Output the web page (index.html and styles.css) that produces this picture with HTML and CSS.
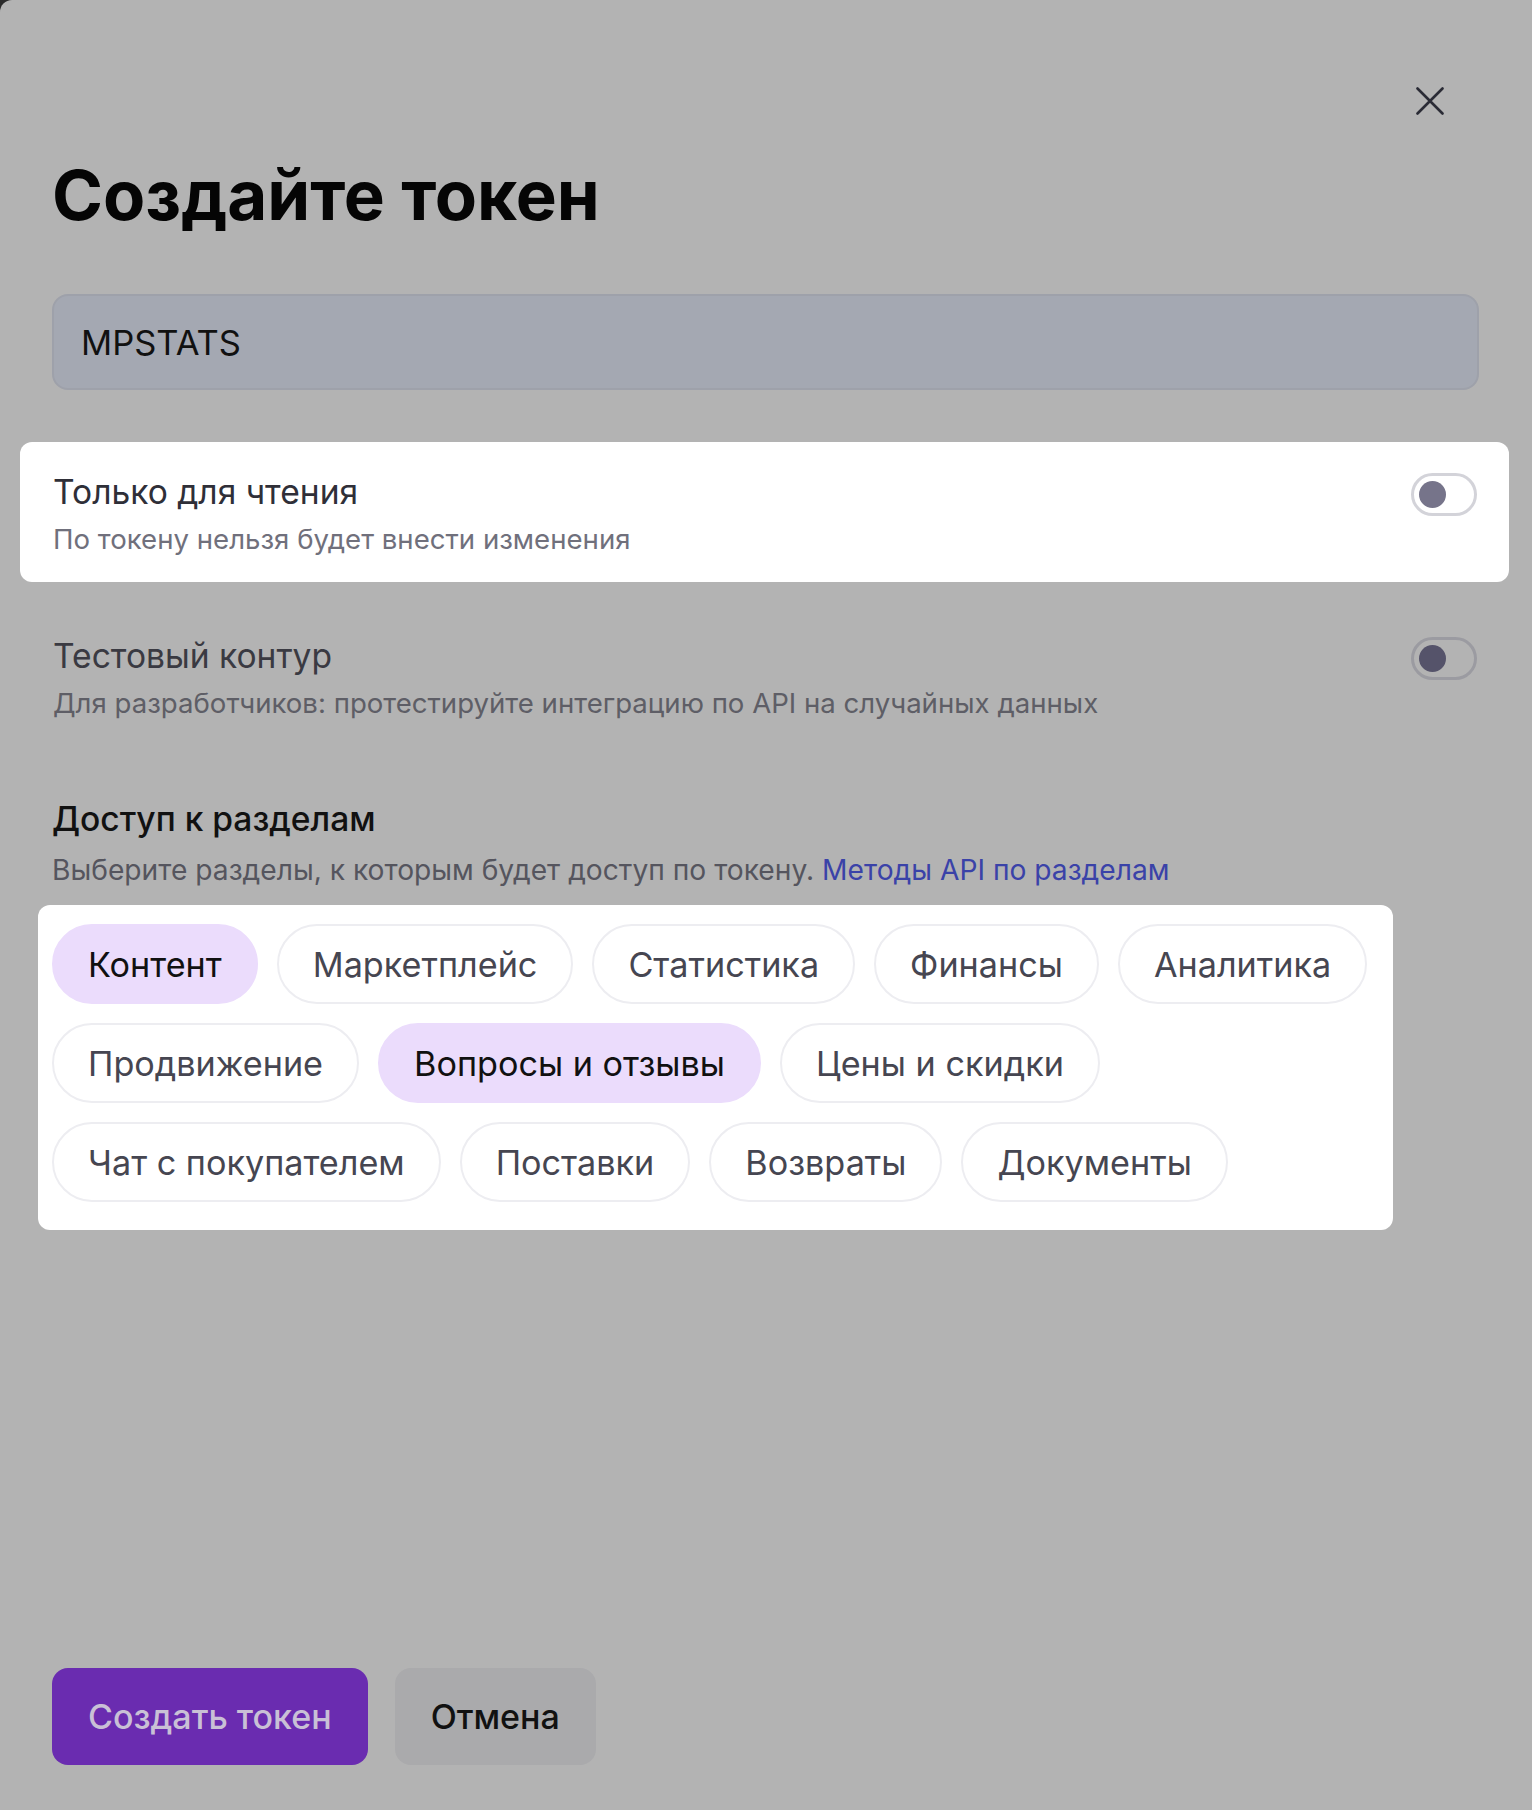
FILE: index.html
```html
<!DOCTYPE html>
<html lang="ru">
<head>
    <meta charset="UTF-8">
    <title>Создайте токен</title>
    <link rel="stylesheet" href="styles.css">
</head>
<body>
<div class="modal">

    <!-- закрыть -->
    <button class="modal-close" type="button">
        <svg width="28" height="28" viewBox="0 0 28 28">
            <path d="M1.5 1.5 L26.5 26.5 M26.5 1.5 L1.5 26.5" stroke="#2a2b35" stroke-width="2.6" stroke-linecap="round" fill="none"/>
        </svg>
    </button>

    <h1 class="modal-title">Создайте токен</h1>

    <div class="field">MPSTATS</div>

    <!-- настройки токена -->
    <div class="option option-active">
        <div class="option-text">
            <div class="option-title">Только для чтения</div>
            <div class="option-desc">По токену нельзя будет внести изменения</div>
        </div>
        <span class="switch"><span class="switch-knob"></span></span>
    </div>

    <div class="option">
        <div class="option-text">
            <div class="option-title">Тестовый контур</div>
            <div class="option-desc">Для разработчиков: протестируйте интеграцию по API на случайных данных</div>
        </div>
        <span class="switch"><span class="switch-knob"></span></span>
    </div>

    <!-- разделы -->
    <div class="section">
        <div class="section-title">Доступ к разделам</div>
        <div class="section-desc">Выберите разделы, к которым будет доступ по токену. <a href="#">Методы API по разделам</a></div>
    </div>

    <div class="chips">
        <span class="chip chip-selected">Контент</span>
        <span class="chip">Маркетплейс</span>
        <span class="chip">Статистика</span>
        <span class="chip">Финансы</span>
        <span class="chip">Аналитика</span>
        <span class="chip">Продвижение</span>
        <span class="chip chip-selected">Вопросы и отзывы</span>
        <span class="chip">Цены и скидки</span>
        <span class="chip">Чат с покупателем</span>
        <span class="chip">Поставки</span>
        <span class="chip">Возвраты</span>
        <span class="chip">Документы</span>
    </div>

    <div class="actions">
        <button class="btn btn-primary" type="button">Создать токен</button>
        <button class="btn btn-secondary" type="button">Отмена</button>
    </div>
</div>
</body>
</html>
```

FILE: styles.css
```css
html {
    background: #2b2b2b;
}

body {
    margin: 0;
    font-family: "Inter", "Noto Sans", sans-serif;
}

.modal {
    position: relative;
    box-sizing: border-box;
    width: 1532px;
    height: 1810px;
    padding: 155px 53px 45px 52px;
    display: flex;
    flex-direction: column;
    align-items: stretch;
    background: #b3b3b3;
    border-top-left-radius: 12px;
}

.modal-close {
    position: absolute;
    top: 87px;
    right: 88px;
    width: 28px;
    height: 28px;
    padding: 0;
    border: none;
    background: none;
}

.modal-close svg {
    display: block;
}

.modal-title {
    margin: 0;
    font-size: 69px;
    line-height: 80px;
    font-weight: 700;
    color: #050505;
}

.field {
    box-sizing: border-box;
    height: 96px;
    margin-top: 59px;
    padding: 0 27px;
    display: flex;
    align-items: center;
    background: #a4a8b2;
    border: 2px solid #9ea1aa;
    border-radius: 16px;
    font-size: 34.5px;
    color: #111;
}

.option {
    box-sizing: border-box;
    height: 140px;
    margin: 0 -30px 0 -32px;
    padding: 28px 32px 0 33px;
    display: flex;
    justify-content: space-between;
    align-items: flex-start;
    border-radius: 12px;
}

.field + .option {
    margin-top: 52px;
}

.option + .option {
    margin-top: 24px;
}

.option-active {
    background: #fff;
}

.option-title {
    font-size: 33.6px;
    line-height: 44px;
    color: #3a3a42;
}

.option-desc {
    margin-top: 8px;
    font-size: 27.6px;
    line-height: 34px;
    color: #5e5e66;
}

.option-active .option-title {
    color: #2f2f38;
}

.option-active .option-desc {
    color: #70707c;
}

.switch {
    box-sizing: border-box;
    width: 66px;
    height: 43px;
    margin-top: 3px;
    padding: 0 0 0 5px;
    display: flex;
    align-items: center;
    border: 3px solid #9b9ba1;
    border-radius: 22px;
}

.switch-knob {
    width: 27px;
    height: 27px;
    border-radius: 50%;
    background: #55536a;
}

.option-active .switch {
    border-color: #d3d3d9;
}

.option-active .switch-knob {
    background: #76748a;
}

.section {
    margin-top: 51px;
}

.section-title {
    font-size: 33.6px;
    line-height: 44px;
    font-weight: 500;
    color: #111;
}

.section-desc {
    margin-top: 12px;
    font-size: 28.2px;
    line-height: 34px;
    color: #55555e;
}

.section-desc a {
    color: #3a42a8;
    text-decoration: none;
}

.chips {
    box-sizing: border-box;
    width: 1355px;
    margin: 18px 0 0 -14px;
    padding: 19px 8px 28px 14px;
    display: flex;
    flex-wrap: wrap;
    gap: 19px;
    background: #fff;
    border-radius: 12px;
}

.chip {
    box-sizing: border-box;
    height: 80px;
    padding: 0 34px;
    display: flex;
    align-items: center;
    border: 2px solid #ededf1;
    border-radius: 40px;
    font-size: 34.2px;
    color: #464651;
}

.chip-selected {
    background: #ebdcfc;
    border-color: #ebdcfc;
    color: #111;
}

.actions {
    margin-top: auto;
    display: flex;
    gap: 27px;
}

.btn {
    box-sizing: border-box;
    height: 97px;
    padding: 0 36px;
    border: none;
    border-radius: 16px;
    font-family: inherit;
    font-size: 34px;
    font-weight: 500;
}

.btn-primary {
    background: #6a2cb0;
    color: #c9c0d6;
}

.btn-secondary {
    background: #aaaaac;
    color: #111;
}
```
